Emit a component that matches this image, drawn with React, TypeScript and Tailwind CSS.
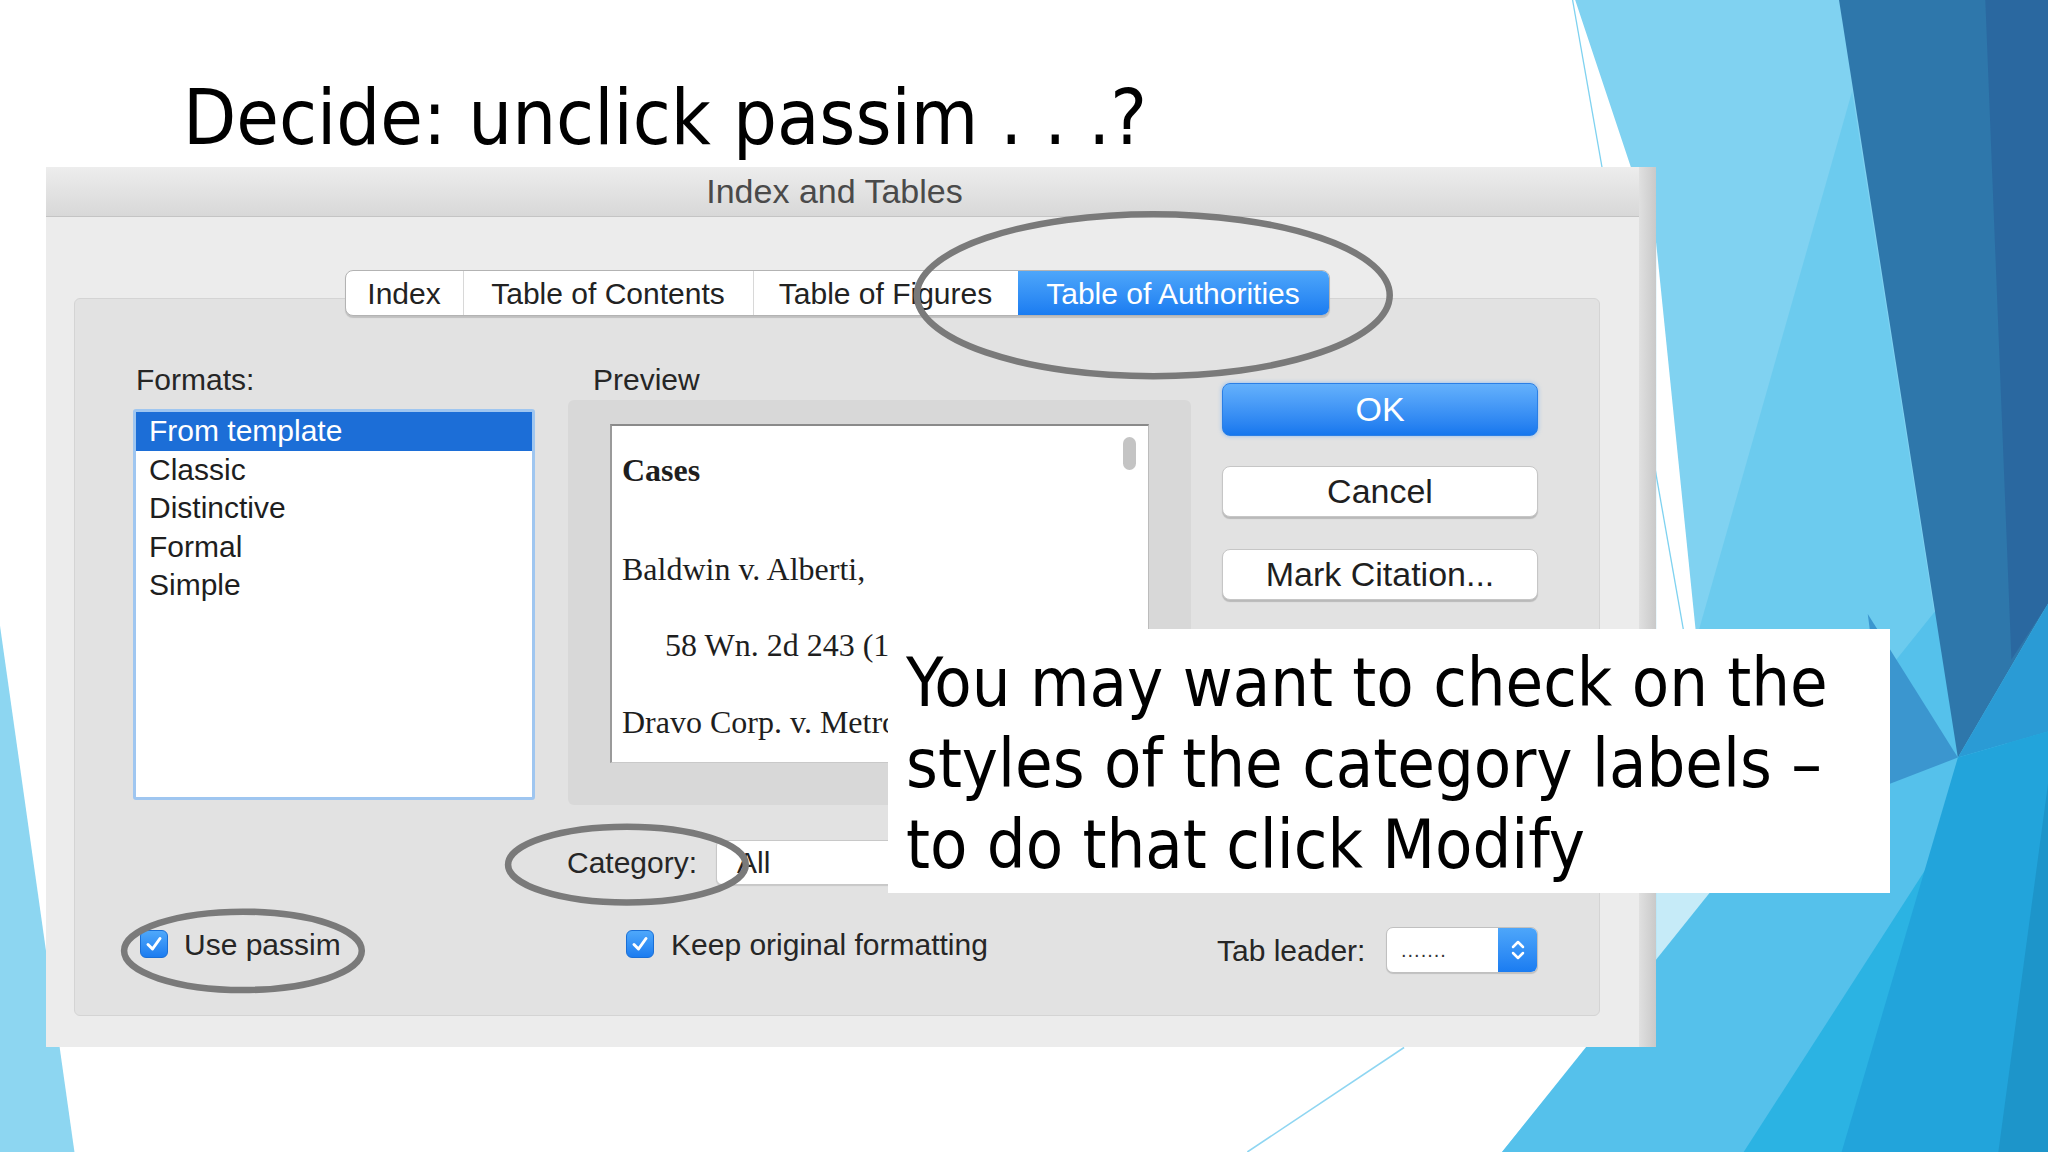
import React from 'react';

const slideFont = "font-['DejaVu_Sans_Condensed','Liberation_Sans_Narrow','DejaVu_Sans',sans-serif]";
const macFont = "font-['Liberation_Sans',Arial,sans-serif]";

function Background() {
  return (
    <svg className="absolute inset-0 w-[2048px] h-[1152px]" viewBox="0 0 1568 882" preserveAspectRatio="none">
      <polygon points="0,479 57,882 0,882" fill="#8dd6f1" />
      <polygon points="1206,0 1568,0 1568,882 1150,882 1268,737 1268,186" fill="#80d2f1" />
      <polygon points="1268,186 1300,500 1268,500" fill="#ffffff" />
      <polygon points="1268,500 1300,500 1322,690 1268,737" fill="#c6ebf8" />
      <polygon points="1418,70 1500,590 1290,520" fill="#6ccbee" />
      <polygon points="1150,882 1568,360 1568,882" fill="#55c1eb" />
      <polygon points="1335,882 1568,520 1568,882" fill="#2bb3e3" />
      <polygon points="1430,470 1499,580 1447,600" fill="#3b96cf" />
      <polygon points="1408,0 1568,0 1568,462 1499,580" fill="#2e77ab" />
      <polygon points="1520,0 1568,0 1568,462 1540,505" fill="#2a68a0" />
      <polygon points="1499,580 1568,462 1568,560" fill="#2a9bd5" />
      <polygon points="1410,882 1499,580 1568,560 1568,882" fill="#22a4db" />
      <polygon points="1530,882 1568,600 1568,882" fill="#1d95ca" />
      <line x1="1204" y1="0" x2="1292" y2="500" stroke="#7fd2f0" strokeWidth="1" />
      <line x1="1075" y1="802" x2="955" y2="882" stroke="#8fd6f2" strokeWidth="1.2" />
    </svg>
  );
}

function CheckBox() {
  return (
    <div className="w-[28px] h-[28px] rounded-[6px] bg-gradient-to-b from-[#4ea8fb] to-[#1b7cf0] border border-[#1a6fd6] flex items-center justify-center">
      <svg width="20" height="20" viewBox="0 0 20 20">
        <path d="M4 10.5 L8.5 15 L16 4.5" fill="none" stroke="#ffffff" strokeWidth="3" strokeLinecap="round" strokeLinejoin="round" />
      </svg>
    </div>
  );
}

function MacButton({ label, primary }: { label: string; primary?: boolean }) {
  return (
    <div
      className={
        primary
          ? 'h-[53px] rounded-[8px] bg-gradient-to-b from-[#64b1fc] to-[#1577ee] border border-[#2a7fe6] text-white flex items-center justify-center text-[34px] shadow-[0_0_4px_rgba(80,160,250,0.6)]'
          : 'h-[51px] rounded-[8px] bg-white border border-[#c6c6c6] text-[#1f1f1f] flex items-center justify-center text-[34px] shadow-[0_2px_1px_rgba(0,0,0,0.18)]'
      }
    >
      {label}
    </div>
  );
}

function Tabs() {
  return (
    <div className="flex justify-center -mt-[29px]">
      <div className="flex h-[46px] rounded-[8px] border border-[#b3b3b3] bg-white shadow-[0_2px_1px_rgba(0,0,0,0.15)] overflow-hidden text-[30px] text-[#222]">
        <div className="w-[118px] flex items-center justify-center border-r border-[#d8d8d8]">Index</div>
        <div className="w-[290px] flex items-center justify-center border-r border-[#d8d8d8]">Table of Contents</div>
        <div className="w-[264px] flex items-center justify-center">Table of Figures</div>
        <div className="w-[311px] flex items-center justify-center bg-gradient-to-b from-[#4da6fa] to-[#1a7cf1] text-white">
          Table of Authorities
        </div>
      </div>
    </div>
  );
}

function Dialog() {
  const formats = ['From template', 'Classic', 'Distinctive', 'Formal', 'Simple'];
  return (
    <div className={`ml-[46px] w-[1610px] h-[880px] flex ${macFont}`}>
      <div className="w-[1593px] flex flex-col bg-[#ececec]">
        <div className="h-[50px] pr-[16px] bg-gradient-to-b from-[#ededed] to-[#d8d8d8] border-b border-[#c4c4c4] flex items-center justify-center text-[34px] text-[#4a4a4a]">
          Index and Tables
        </div>
        <div className="flex-1 pl-[28px] pt-[81px]">
          <div className="w-[1526px] h-[718px] rounded-[6px] border border-[#d4d4d4] bg-[#e2e2e2]">
            <Tabs />

            <div className="flex items-start mt-[46px] pl-[58px]">
              <div className="w-[402px] flex flex-col">
                <div className="h-[36px] leading-[36px] pl-[3px] text-[30px] text-[#262626]">Formats:</div>
                <div className="mt-[11px] w-[402px] h-[391px] rounded-[3px] border-[3px] border-[#9fc6f0] bg-white overflow-hidden">
                  {formats.map((f, i) => (
                    <div
                      key={f}
                      className={`h-[38.5px] leading-[38.5px] pl-[13px] text-[30px] ${
                        i === 0 ? 'bg-[#1c6ed7] text-white' : 'text-[#1e1e1e]'
                      }`}
                    >
                      {f}
                    </div>
                  ))}
                </div>
              </div>

              <div className="ml-[33px] w-[623px] flex flex-col">
                <div className="h-[36px] leading-[36px] pl-[25px] text-[30px] text-[#262626]">Preview</div>
                <div className="mt-[2px] w-[623px] h-[405px] rounded-[6px] bg-[#d8d8d8] pt-[24px] px-[42px]">
                  <div className="relative h-[339px] bg-white border-t-2 border-l-2 border-t-[#8a8a8a] border-l-[#9a9a9a] border-r border-b border-r-[#bcbcbc] border-b-[#c9c9c9] overflow-hidden whitespace-nowrap font-['Liberation_Serif','Times_New_Roman',serif] text-[32px] text-[#1e1e1e]">
                    <div className="mt-[24px] pl-[10px] h-[40px] leading-[40px] font-bold">Cases</div>
                    <div className="mt-[59px] pl-[10px] h-[40px] leading-[40px]">Baldwin v. Alberti,</div>
                    <div className="mt-[36px] pl-[53px] h-[40px] leading-[40px]">58 Wn. 2d 243 (1961)</div>
                    <div className="mt-[37px] pl-[10px] h-[40px] leading-[40px]">Dravo Corp. v. Metro Seattle,</div>
                    <div className="absolute right-[12px] top-[11px] w-[13px] h-[33px] rounded-full bg-[#c4c4c4]" />
                  </div>
                </div>
              </div>

              <div className="ml-[31px] mt-[21px] w-[316px] flex flex-col">
                <MacButton label="OK" primary />
                <div className="mt-[30px]"><MacButton label="Cancel" /></div>
                <div className="mt-[32px]"><MacButton label="Mark Citation..." /></div>
                <div className="mt-[32px]"><MacButton label="Modify..." /></div>
              </div>
            </div>

            <div className="flex items-center mt-[35px] h-[45px] pl-[492px]">
              <div className="text-[30px] text-[#262626]">Category:</div>
              <div className="ml-[19px] w-[430px] h-[45px] rounded-[6px] border border-[#c8c8c8] bg-white pl-[20px] flex items-center text-[30px] text-[#222] shadow-[0_1px_1px_rgba(0,0,0,0.12)]">
                All
              </div>
            </div>

            <div className="flex items-center mt-[42px] h-[46px] text-[30px] text-[#262626]">
              <div className="pl-[65px] pb-[12px] w-[551px] flex items-center gap-[16px]">
                <CheckBox />
                <span>Use passim</span>
              </div>
              <div className="w-[591px] pb-[12px] flex items-center gap-[17px]">
                <CheckBox />
                <span>Keep original formatting</span>
              </div>
              <div className="flex items-center">
                <span className="w-[169px]">Tab leader:</span>
                <div className="flex w-[152px] h-[46px] rounded-[7px] border border-[#c0c0c0] bg-white overflow-hidden shadow-[0_1px_1px_rgba(0,0,0,0.15)]">
                  <div className="flex-1 pl-[14px] flex items-center text-[20px] tracking-[1px] text-[#333]">.......</div>
                  <div className="w-[39px] bg-gradient-to-b from-[#4da6fa] to-[#1a7cf1] flex items-center justify-center">
                    <svg width="16" height="26" viewBox="0 0 16 26">
                      <path d="M3 10 L8 5 L13 10" fill="none" stroke="#fff" strokeWidth="2.5" strokeLinecap="round" strokeLinejoin="round" />
                      <path d="M3 16 L8 21 L13 16" fill="none" stroke="#fff" strokeWidth="2.5" strokeLinecap="round" strokeLinejoin="round" />
                    </svg>
                  </div>
                </div>
              </div>
            </div>
          </div>
        </div>
      </div>
      <div className="w-[17px] bg-gradient-to-r from-[#e0e0e0] to-[#c9c9c9]" />
    </div>
  );
}

function Annotations() {
  return (
    <svg className="absolute inset-0 w-[2048px] h-[1152px] pointer-events-none" viewBox="0 0 1568 882" preserveAspectRatio="none">
      <ellipse cx="883" cy="226" rx="181" ry="62" fill="none" stroke="#7a7a7a" strokeWidth="5" />
      <ellipse cx="480" cy="662" rx="91" ry="29" fill="none" stroke="#7a7a7a" strokeWidth="5" />
      <ellipse cx="186" cy="728" rx="91" ry="30" fill="none" stroke="#7a7a7a" strokeWidth="5" />
    </svg>
  );
}

export default function App() {
  return (
    <div className="relative w-[2048px] h-[1152px] overflow-hidden bg-white">
      <Background />
      <div className="relative">
        <div className={`h-[167px] pt-[79px] pl-[183px] text-[77px] leading-none text-black ${slideFont}`}>
          Decide: unclick passim . . .?
        </div>
        <Dialog />
      </div>
      <div className={`absolute left-[888px] top-[629px] w-[1002px] h-[264px] bg-white pl-[18px] pt-[13px] text-[68px] leading-[81px] text-black ${slideFont}`}>
        <div>You may want to check on the</div>
        <div>styles of the category labels –</div>
        <div>to do that click Modify</div>
      </div>
      <Annotations />
    </div>
  );
}
